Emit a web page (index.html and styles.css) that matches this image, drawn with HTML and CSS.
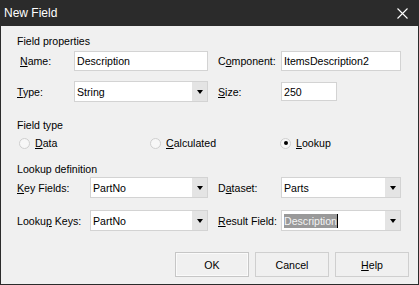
FILE: index.html
```html
<!DOCTYPE html>
<html>
<head>
<meta charset="utf-8">
<link rel="stylesheet" href="styles.css">
</head>
<body>
<div class="window">
  <div class="titlebar">
    <span class="title">New Field</span>
    <svg class="close" width="11" height="11" viewBox="0 0 11 11"><path d="M0.5 0.5L10.5 10.5M10.5 0.5L0.5 10.5" stroke="#fff" stroke-width="1.1" fill="none"/></svg>
  </div>
  <div class="content">
    <div class="heading h1">Field properties</div>
    <div class="row r1">
      <label class="lbl lname"><u>N</u>ame:</label>
      <div class="edit wname"><span>Description</span></div>
      <label class="lbl lright">C<u>o</u>mponent:</label>
      <div class="edit wright"><span>ItemsDescription2</span></div>
    </div>
    <div class="row r2">
      <label class="lbl ltype"><u>T</u>ype:</label>
      <div class="combo wname"><span class="val">String</span><span class="btn"><i></i></span></div>
      <label class="lbl lright"><u>S</u>ize:</label>
      <div class="edit wsize"><span>250</span></div>
    </div>
    <div class="heading h2">Field type</div>
    <div class="radios">
      <div class="radio"><span class="dot"></span><span><u>D</u>ata</span></div>
      <div class="radio"><span class="dot"></span><span><u>C</u>alculated</span></div>
      <div class="radio"><span class="dot on"></span><span><u>L</u>ookup</span></div>
    </div>
    <div class="heading h3">Lookup definition</div>
    <div class="row r3">
      <label class="lbl lkey"><u>K</u>ey Fields:</label>
      <div class="combo wkey"><span class="val">PartNo</span><span class="btn"><i></i></span></div>
      <label class="lbl lright">D<u>a</u>taset:</label>
      <div class="combo wright"><span class="val">Parts</span><span class="btn"><i></i></span></div>
    </div>
    <div class="row r4">
      <label class="lbl lkey">Looku<u>p</u> Keys:</label>
      <div class="combo wkey"><span class="val">PartNo</span><span class="btn"><i></i></span></div>
      <label class="lbl lright"><u>R</u>esult Field:</label>
      <div class="combo wright"><span class="val"><span class="sel">Description</span><span class="caret"></span></span><span class="btn"><i></i></span></div>
    </div>
    <div class="buttons">
      <button class="pbtn def">OK</button>
      <button class="pbtn">Cancel</button>
      <button class="pbtn"><u>H</u>elp</button>
    </div>
  </div>
</div>
</body>
</html>
```
FILE: styles.css
```css
* { box-sizing: border-box; }
html, body { margin: 0; padding: 0; }
body { background: #f0f0f0; }
.window {
  width: 419px;
  height: 285px;
  background: #f0f0f0;
  border: 1px solid #2b2b2b;
  border-top: none;
  display: flex;
  flex-direction: column;
  font-family: "Liberation Sans", Arial, sans-serif;
  font-size: 10.6px;
  color: #000;
}
.titlebar {
  height: 26px;
  margin: 0 -1px;
  background: #2b2b2b;
  display: flex;
  align-items: center;
  justify-content: space-between;
  padding: 0 11px 0 4px;
  flex-shrink: 0;
}
.title {
  color: #fff;
  font-family: "Liberation Sans", Arial, sans-serif;
  font-size: 12px;
  line-height: 16px;
}
.close { display: block; }
.content {
  display: flex;
  flex-direction: column;
  padding: 0 8px 0 0;
}
.heading {
  line-height: 14px;
  height: 14px;
  padding-left: 16px;
}
.h1 { margin-top: 8px; }
.h2 { margin-top: 16px; }
.h3 { margin-top: 12px; }
.row {
  display: flex;
  align-items: center;
  height: 21px;
}
.r1 { margin-top: 3px; height: 20px; }
.r2 { margin-top: 10px; }
.r3 { margin-top: 1px; }
.r4 { margin-top: 12px; }
.lbl { display: block; line-height: 14px; white-space: nowrap; }
.lname { padding-left: 19px; width: 73px; }
.ltype { padding-left: 16px; width: 73px; }
.lkey { padding-left: 16px; width: 89px; }
.lright { margin-left: 10px; width: 63px; }
.edit, .combo {
  background: #fff;
  border: 1px solid #d3d3d3;
  display: flex;
  align-items: center;
  line-height: 14px;
}
.edit { height: 20px; padding-left: 2px; }
.r2 .edit { height: 19px; }
.combo { height: 21px; padding-left: 2px; }
.combo .val { flex: 1; display: flex; align-items: center; }
.wname { width: 134px; }
.wright { width: 120px; }
.wsize { width: 56px; }
.wkey { width: 118px; }
.btn {
  width: 15px;
  height: 19px;
  background: #e4e4e4;
  display: flex;
  align-items: center;
  justify-content: center;
}
.btn i {
  display: block;
  width: 0;
  height: 0;
  border-left: 3.5px solid transparent;
  border-right: 3.5px solid transparent;
  border-top: 4px solid #000;
  margin-top: 1px;
}
.sel {
  background: #999999;
  color: #f4f4f4;
  line-height: 14px;
}
.caret {
  display: block;
  width: 1px;
  height: 14px;
  background: #000;
}
.radios {
  display: grid;
  grid-template-columns: 131px 130px 1fr;
  margin-top: 4px;
  padding-left: 18px;
  height: 14px;
}
.radio {
  display: flex;
  align-items: center;
  gap: 5px;
  line-height: 14px;
}
.dot {
  width: 11px;
  height: 11px;
  border-radius: 50%;
  border: 1px solid #cfcfcf;
  background: #f7f7f7;
  display: flex;
  align-items: center;
  justify-content: center;
}
.dot.on::after {
  content: "";
  width: 4px;
  height: 4px;
  border-radius: 50%;
  background: #000;
}
.buttons {
  display: flex;
  justify-content: flex-end;
  gap: 6px;
  margin-top: 21px;
  padding-right: 1px;
}
.pbtn {
  width: 74px;
  height: 25px;
  background: #f0f0f0;
  border: 1px solid #cfcfcf;
  font-family: "Liberation Sans", Arial, sans-serif;
  font-size: 10.6px;
  color: #000;
  padding: 0;
}
.pbtn.def { box-shadow: inset 0 0 0 1px #fafafa; border-color: #c6c6c6; }
```
